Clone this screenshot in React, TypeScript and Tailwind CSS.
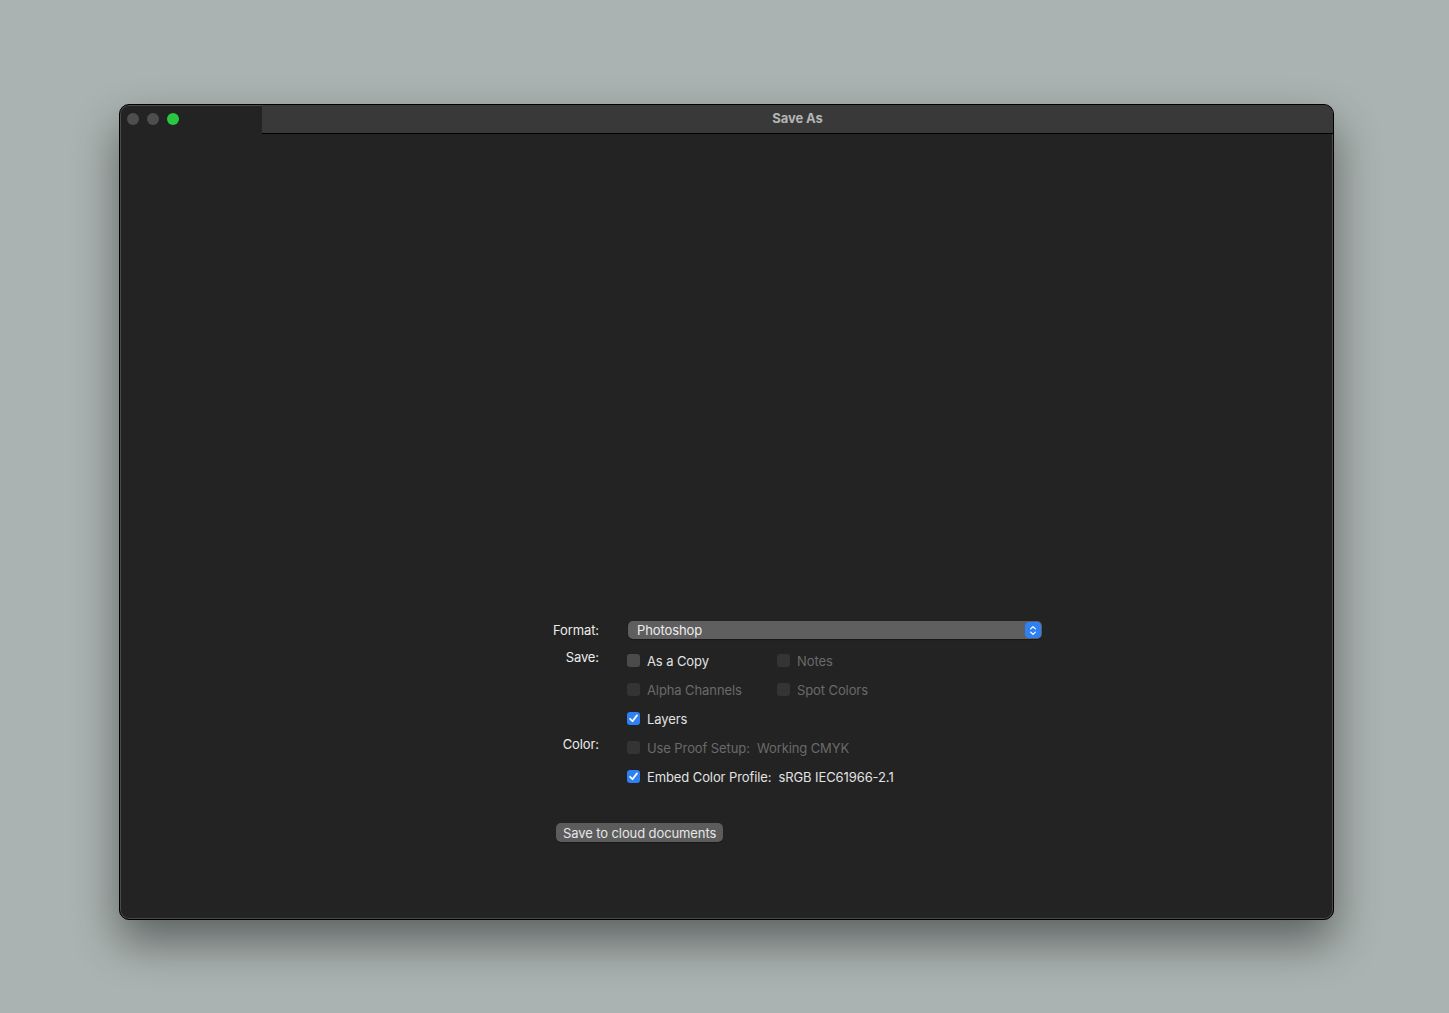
import type { FC, ReactNode } from 'react';

// ─── Pieces ─────────────────────────────────────────────────────────────────

const CheckIcon: FC = () => (
  <svg viewBox="0 0 12 12" className="w-[11px] h-[11px]">
    <path d="M2.3 6.3 L4.9 9 L9.8 2.6" fill="none" stroke="#fff" strokeWidth="1.9" strokeLinecap="round" strokeLinejoin="round" />
  </svg>
);

interface CheckProps {
  label: ReactNode;
  checked?: boolean;
  disabled?: boolean;
}

const Check: FC<CheckProps> = ({ label, checked = false, disabled = false }) => (
  <div className="flex items-center gap-[7px]">
    {checked ? (
      <span className="flex items-center justify-center w-[13px] h-[13px] rounded-[3px] bg-[#2f80f3]">
        <CheckIcon />
      </span>
    ) : (
      <span
        className={
          disabled
            ? 'w-[13px] h-[13px] rounded-[3px] bg-[#343434]'
            : 'w-[13px] h-[13px] rounded-[3px] bg-[#4b4b4b]'
        }
      />
    )}
    <span className={disabled ? 'text-[#6a6a6a]' : 'text-[#e2e2e2]'}>{label}</span>
  </div>
);

// ─── App ────────────────────────────────────────────────────────────────────

export default function App() {
  return (
    <div
      className="min-h-[1013px] bg-[#aab3b1] pt-[104px] pl-[119px] text-[13px] leading-[16px] tracking-[-0.1px]"
      style={{ fontFamily: 'Inter, "Liberation Sans", sans-serif' }}
    >
      <div className="w-[1215px] h-[816px] rounded-[10px] border border-black bg-[#232323] overflow-hidden flex flex-col shadow-[0_22px_45px_rgba(0,0,0,0.45),inset_0_0_0_1px_rgba(255,255,255,0.18)]">
        {/* Title bar */}
        <div className="flex h-[29px] shrink-0">
          <div className="w-[142px] flex items-center gap-[8px] pl-[7px] pb-px">
            <span className="w-[12px] h-[12px] rounded-full bg-[#4e4e4e]" />
            <span className="w-[12px] h-[12px] rounded-full bg-[#4e4e4e]" />
            <span className="w-[12px] h-[12px] rounded-full bg-[#29c840]" />
          </div>
          <div className="flex-1 flex items-center justify-center pb-[2px] bg-[#393939] border-b border-black font-bold text-[#b4b4b4]">
            Save As
          </div>
        </div>

        {/* Body */}
        <div className="flex-1 pt-[487px]">
          <div className="ml-[380px]">
            {/* Format */}
            <div className="flex items-center h-[18px]">
              <div className="w-[100px] text-right text-[#ececec] pr-px">Format:</div>
              <div className="ml-[28px] w-[414px] h-[18px] rounded-[5px] bg-[#5f5f5f] flex items-center justify-between pl-[9px] pr-px shadow-[0_1px_1px_rgba(0,0,0,0.35)]">
                <span className="text-[#ededed]">Photoshop</span>
                <span className="w-[16px] h-[16px] rounded-[4px] bg-[#2f80f3] flex items-center justify-center">
                  <svg viewBox="0 0 10 14" className="w-[8px] h-[11px]">
                    <path d="M2 5 L5 2 L8 5 M2 9 L5 12 L8 9" fill="none" stroke="#fff" strokeWidth="1.6" strokeLinecap="round" strokeLinejoin="round" />
                  </svg>
                </span>
              </div>
            </div>

            {/* Save */}
            <div className="flex mt-[7px]">
              <div className="w-[100px] text-right text-[#ececec] pt-[3px] pr-px">Save:</div>
              <div className="ml-[27px] flex flex-col">
                <div className="flex h-[29px] items-center">
                  <div className="w-[150px]">
                    <Check label="As a Copy" />
                  </div>
                  <Check label="Notes" disabled />
                </div>
                <div className="flex h-[29px] items-center">
                  <div className="w-[150px]">
                    <Check label="Alpha Channels" disabled />
                  </div>
                  <Check label="Spot Colors" disabled />
                </div>
                <div className="flex h-[29px] items-center">
                  <Check label="Layers" checked />
                </div>
              </div>
            </div>

            {/* Color */}
            <div className="flex">
              <div className="w-[100px] text-right text-[#ececec] pt-[3px] pr-px">Color:</div>
              <div className="ml-[27px] flex flex-col">
                <div className="flex h-[29px] items-center">
                  <Check label={<>Use Proof Setup:&nbsp; Working CMYK</>} disabled />
                </div>
                <div className="flex h-[29px] items-center">
                  <Check label={<>Embed Color Profile:&nbsp; sRGB IEC61966-2.1</>} checked />
                </div>
              </div>
            </div>
          </div>

          {/* Cloud */}
          <div className="ml-[436px] mt-[32px]">
            <button className="h-[19px] px-[7px] rounded-[5px] bg-[#5c5c5c] text-[#e6e6e6] shadow-[0_1px_1px_rgba(0,0,0,0.3)]">
              Save to cloud documents
            </button>
          </div>
        </div>
      </div>
    </div>
  );
}
